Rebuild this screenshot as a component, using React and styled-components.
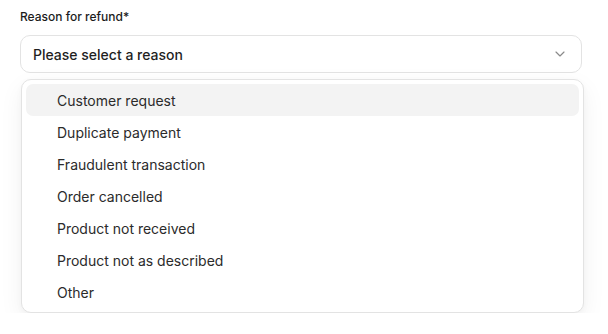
import React from 'react'
import styled, { createGlobalStyle } from 'styled-components'
import { ChevronDown } from 'lucide-react'

const GlobalStyle = createGlobalStyle`
  * { margin: 0; padding: 0; box-sizing: border-box; }
  body { background: #fff; font-family: Inter, "Noto Sans", sans-serif; }
`

const Field = styled.div`
  display: flex;
  flex-direction: column;
  padding: 9px 26px 0 20px;
  width: 608px;
`

const Label = styled.label`
  font-size: 12px;
  line-height: 16px;
  font-weight: 500;
  color: #1c1c1c;
  margin-bottom: 10px;
`

const Trigger = styled.button`
  display: flex;
  align-items: center;
  justify-content: space-between;
  height: 38px;
  padding: 0 13px 0 12px;
  border: 1px solid #e3e3e3;
  border-radius: 10px;
  background: #fff;
  font-family: inherit;
  font-size: 14px;
  font-weight: 500;
  color: #1f1f1f;
  text-align: left;
  svg { color: #8a8a8a; }
`

const Menu = styled.ul`
  list-style: none;
  margin: 6px -2px 0 1px;
  padding: 4px 4px;
  border: 1px solid #e3e3e3;
  border-radius: 10px;
  background: #fff;
  box-shadow: 0 8px 24px rgba(0, 0, 0, 0.06), 0 2px 6px rgba(0, 0, 0, 0.03);
`

const Item = styled.li`
  height: 32px;
  display: flex;
  align-items: center;
  padding-left: 31px;
  border-radius: 7px;
  font-size: 14px;
  color: #2b2b2b;
  background: ${p => (p.$active ? '#f3f3f3' : 'transparent')};
`

const reasons = [
  'Customer request',
  'Duplicate payment',
  'Fraudulent transaction',
  'Order cancelled',
  'Product not received',
  'Product not as described',
  'Other',
]

export default function App() {
  return (
    <>
      <GlobalStyle />
      <Field>
        <Label>Reason for refund*</Label>
        <Trigger>
          Please select a reason
          <ChevronDown size={16} strokeWidth={1.75} />
        </Trigger>
        <Menu>
          {reasons.map((r, i) => (
            <Item key={r} $active={i === 0}>{r}</Item>
          ))}
        </Menu>
      </Field>
    </>
  )
}
